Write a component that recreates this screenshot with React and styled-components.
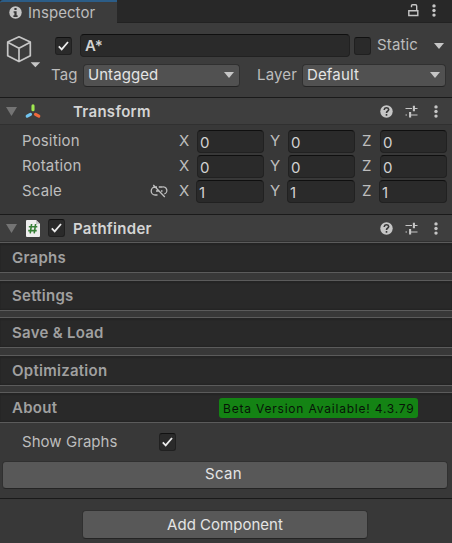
import React from "react";
import styled, { createGlobalStyle } from "styled-components";

const GlobalStyle = createGlobalStyle`
  * { box-sizing: border-box; }
  body { margin: 0; background: #383838; }
`;

const Panel = styled.main`
  width: 452px;
  height: 543px;
  overflow: hidden;
  background: #383838;
  color: #bdbdbd;
  font: 400 15px/18px Inter, sans-serif;
  letter-spacing: 0.15px;
  white-space: nowrap;
`;

const TabBar = styled.header`
  display: flex;
  height: 23px;
  background: #282828;
`;

const Tab = styled.div`
  display: flex;
  align-items: center;
  gap: 6px;
  width: 117px;
  padding-left: 9px;
  border-top: 2px solid #2c5d87;
  border-top-left-radius: 3px;
  background: #3c3c3c;
`;

const TabTools = styled.div`
  display: flex;
  flex: 1;
  align-items: center;
  justify-content: flex-end;
  gap: 12px;
  padding: 0 15px 2px 0;
  border-bottom: 1px solid #222;
`;

const Label = styled.span`
  font-weight: ${(p) => p.$weight || 400};
  letter-spacing: ${(p) => p.$track ?? 0.15}px;
  color: ${(p) => p.$color || "inherit"};
`;

const ObjectHeader = styled.section`
  display: flex;
  height: 75px;
  padding: 11px 0 0 5px;
  border-bottom: 1px solid #1a1a1a;
  background: #3c3c3c;
`;

const CubeSlot = styled.div`
  width: 46px;
  padding-top: 1px;
`;

const HeaderRows = styled.div`
  display: flex;
  flex-direction: column;
  gap: 7px;
`;

const NameRow = styled.div`
  display: grid;
  grid-template-columns: 25px 274px 23px 57px 11px;
  align-items: center;
  height: 23px;
  padding-left: 4px;

  & > :nth-child(4) { padding-bottom: 2px; }
`;

const SelectRow = styled.div`
  display: grid;
  grid-template-columns: 32px 157px 17px 45px 144px;
  align-items: center;
  height: 23px;

  & > :nth-child(3) { grid-column: 4; }
  & > span { padding: 0 0 1px; }
`;

const Check = styled.span`
  display: flex;
  align-items: center;
  justify-content: center;
  width: 17px;
  height: 18px;
  border: 1px solid #202020;
  border-top-color: #111;
  border-radius: 3px;
  background: #2a2a2a;
`;

const Field = styled.div`
  display: flex;
  align-items: center;
  width: ${(p) => p.$width}px;
  height: 23px;
  margin-left: ${(p) => p.$shift || 0}px;
  padding: ${(p) => p.$pad || "2px 0 0 2px"};
  border: 1px solid #212121;
  border-top-color: #0f0f0f;
  border-radius: 4px;
  background: #2a2a2a;
  color: #d2d2d2;
`;

const Select = styled.div`
  display: flex;
  align-items: center;
  justify-content: space-between;
  height: 23px;
  padding: 0 5px 1px 4px;
  border: 1px solid #303030;
  border-bottom-color: #242424;
  border-radius: 4px;
  background: #515151;
  color: #e4e4e4;
`;

const ComponentHeader = styled.div`
  display: grid;
  grid-template-columns: 19px 23px 25px 1fr auto;
  align-items: center;
  height: 27px;
  padding: 0 13px 0 6px;
  border-bottom: 1px solid #303030;
  background: #3e3e3e;

  & > :nth-child(4) { padding-top: 2px; }
`;

const HeaderTools = styled.div`
  display: grid;
  grid-template-columns: 25px 28px 6px;
  align-items: center;
`;

const TransformBody = styled.div`
  display: flex;
  flex-direction: column;
  gap: 2px;
  height: 90px;
  padding: 5px 0 0 22px;
  border-bottom: 1px solid #1a1a1a;
`;

const VectorRow = styled.div`
  display: grid;
  grid-template-columns: 129px 28px 18px 73px 18px 74px 18px 68px;
  align-items: center;
  height: 23px;

  & > span { padding-bottom: 1px; }
`;

const Foldouts = styled.div`
  display: flex;
  flex-direction: column;
`;

const Foldout = styled.div`
  display: grid;
  grid-template-columns: 207px 199px;
  align-items: center;
  height: 31px;
  margin-top: ${(p) => p.$gap}px;
  padding: 0 0 0 12px;
  border-top: 1px solid #5b5b5b;
  border-bottom: 1px solid #5b5b5b;
  background: #292929;
  box-shadow: inset 0 2px 1px #242424, inset 0 -1px 1px #242424;
`;

const Badge = styled.span`
  height: 20px;
  padding-left: 4px;
  border-radius: 3px;
  background: #148314;
  color: #071507;
  font-size: 12px;
  line-height: 21px;
  letter-spacing: 0.8px;
`;

const ShowRow = styled.div`
  display: grid;
  grid-template-columns: 137px 17px;
  align-items: center;
  height: 38px;
  padding: 0 0 1px 22px;
`;

const Button = styled.button`
  display: block;
  width: ${(p) => p.$width}px;
  height: ${(p) => p.$height}px;
  margin: 0 0 0 ${(p) => p.$left}px;
  padding: 0 ${(p) => p.$nudge || 0}px ${(p) => p.$lift || 0}px 0;
  border: 1px solid #303030;
  border-bottom-color: #242424;
  border-radius: 4px;
  background: #585858;
  color: #e4e4e4;
  font: inherit;
  letter-spacing: ${(p) => p.$track}px;
`;

const AddArea = styled.footer`
  margin-top: 9px;
  padding-top: 11px;
  border-top: 1px solid #1a1a1a;
`;

const Svg = styled.svg`
  display: block;
  overflow: visible;
`;

const Info = () => (
  <Svg width="13" height="13" viewBox="0 0 13 13">
    <circle cx="6.5" cy="6.5" r="6.2" fill="#c6c6c6" />
    <path d="M5.4 2h2.2v2H5.4zM4.6 5.3h3v4h1V11H4.4V9.3h1V6.8h-.8z" fill="#383838" />
  </Svg>
);
const Lock = () => (
  <Svg width="11" height="13" viewBox="0 0 11 13">
    <path d="M.8 6.8h9v4.7h-9zM3.5 3.2V1.6Q3.5.8 4.5.8h3q1.2 0 1.2 1.2v4.5" fill="none" stroke="#c6c6c6" strokeWidth="1.4" />
  </Svg>
);
const Dots = () => (
  <Svg width="6" height="13" viewBox="0 0 6 13">
    {[1.9, 6.5, 11.1].map((y) => <circle key={y} cx="3" cy={y} r="1.7" fill="#c6c6c6" />)}
  </Svg>
);
const Cube = () => (
  <Svg width="36" height="33" viewBox="0 0 36 33">
    <path d="M14 1.8 25.3 7V20.8L14 26.6 2.7 20.8V7zM2.7 7.2 14 13.3l11.3-6.1M14 13.3v13" fill="none" stroke="#c6c6c6" strokeWidth="1.7" strokeLinejoin="round" />
    <path d="M25.6 27.3h9.6l-4.8 5z" fill="#c6c6c6" />
  </Svg>
);
const Arrow = ({ color = "#c6c6c6", w = 10, h = 6 }) => (
  <Svg width={w} height={h} viewBox="0 0 10 6" preserveAspectRatio="none"><path d="M0 0h10L5 6z" fill={color} /></Svg>
);
const Tick = () => (
  <Svg width="11" height="10" viewBox="0 0 11 10"><path d="m.8 5.4 2.9 3L10 1" fill="none" stroke="#ececec" strokeWidth="1.8" /></Svg>
);
const Axes = () => (
  <Svg width="16" height="15" viewBox="0 0 16 15">
    <g fill="none" strokeWidth="3.1" strokeLinecap="round">
      <path d="M8 1.8v4" stroke="#a0e850" /><path d="m2.2 12.2 3.3-1.9" stroke="#70c4f0" /><path d="m10.5 10.3 3.3 1.9" stroke="#f06a3c" />
    </g>
  </Svg>
);
const Script = () => (
  <Svg width="16" height="17" viewBox="0 0 16 17">
    <path d="M1 0h10l4 4v12q0 1-1 1H2q-1 0-1-1V1q0-1 1-1z" fill="#eee" />
    <path d="M11 0v4h4z" fill="#c8c8c8" />
    <path d="M6.6 4 5.2 13.4M10.6 4 9.2 13.4M3.8 6.8h8.5M3.2 10.6h8.5" stroke="#378037" strokeWidth="1.6" />
  </Svg>
);
const Help = () => (
  <Svg width="13" height="13" viewBox="0 0 13 13">
    <circle cx="6.5" cy="6.5" r="6.2" fill="#c6c6c6" />
    <path d="M4.3 5V4.4Q4.6 2.8 6.5 2.8T8.7 4.5Q8.7 5.5 7.5 6.2 6.5 6.8 6.5 8M6.5 9.1v1.6" fill="none" stroke="#383838" strokeWidth="1.6" />
  </Svg>
);
const Sliders = () => (
  <Svg width="13" height="13" viewBox="0 0 13 13">
    <path d="M.5 3.5H7M9 3.5H12.5M.5 10H2M5 10h7.5" stroke="#c6c6c6" strokeWidth="1.2" />
    <path d="M8.9.7v5.5M5.1 7v5.4" stroke="#c6c6c6" strokeWidth="2.1" />
  </Svg>
);
const Unlink = () => (
  <Svg width="16" height="14" viewBox="0 0 16 14">
    <path d="M6 3H4.2a3.6 3.6 0 0 0 0 8H6.5M7.8 3h3.4a3.6 3.6 0 0 1 2 7M5 7h2.5M10 7h1.5M2.3 1l11.5 12" fill="none" stroke="#c0c0c0" strokeWidth="1.3" />
  </Svg>
);

const Tools = () => <HeaderTools><Help /><Sliders /><Dots /></HeaderTools>;

const vectors = [
  { name: "Position", value: 0, width: 67, shift: 0 },
  { name: "Rotation", value: 0, width: 67, shift: 0 },
  { name: "Scale", value: 1, width: 68, shift: -1, unlinked: true },
];
const sections = [["Graphs", 0], ["Settings", 7], ["Save & Load", 6], ["Optimization", 7], ["About", 6]];

export default function App() {
  return (
    <Panel>
      <GlobalStyle />
      <TabBar>
        <Tab><Info /><Label $track={0.05}>Inspector</Label></Tab>
        <TabTools><Lock /><Dots /></TabTools>
      </TabBar>
      <ObjectHeader>
        <CubeSlot><Cube /></CubeSlot>
        <HeaderRows>
          <NameRow>
            <Check><Tick /></Check>
            <Field $width={270} $pad="0 0 0 4px"><Label $weight={600} $track={0.3}>A*</Label></Field>
            <Check />
            <Label>Static</Label>
            <Arrow />
          </NameRow>
          <SelectRow>
            <Label>Tag</Label>
            <Select><Label $track={0.05}>Untagged</Label><Arrow /></Select>
            <Label>Layer</Label>
            <Select><Label>Default</Label><Arrow /></Select>
          </SelectRow>
        </HeaderRows>
      </ObjectHeader>
      <ComponentHeader>
        <Arrow color="#747474" w={11} h={9} /><Axes /><i />
        <Label $weight={600} $track={0.3} $color="#d4d4d4">Transform</Label>
        <Tools />
      </ComponentHeader>
      <TransformBody>
        {vectors.map(({ name, value, width, shift, unlinked }) => (
          <VectorRow key={name}>
            <Label>{name}</Label>
            <span>{unlinked && <Unlink />}</span>
            <Label>X</Label><Field $width={width} $shift={shift}>{value}</Field>
            <Label>Y</Label><Field $width={width} $shift={shift}>{value}</Field>
            <Label>Z</Label><Field $width={width} $shift={shift}>{value}</Field>
          </VectorRow>
        ))}
      </TransformBody>
      <ComponentHeader>
        <Arrow color="#747474" w={11} h={9} /><Script /><Check><Tick /></Check>
        <Label $weight={600} $track={0.3} $color="#d4d4d4">Pathfinder</Label>
        <Tools />
      </ComponentHeader>
      <Foldouts>
        {sections.map(([name, gap]) => (
          <Foldout key={name} $gap={gap}>
            <Label $weight={600} $track={0.27} $color="#a0a0a0">{name}</Label>
            {name === "About" && <Badge>Beta Version Available! 4.3.79</Badge>}
          </Foldout>
        ))}
      </Foldouts>
      <ShowRow><Label $track={0.05}>Show Graphs</Label><Check><Tick /></Check></ShowRow>
      <Button $width={446} $height={28} $left={2} $lift={2} $nudge={3} $track={0.4}>Scan</Button>
      <AddArea><Button $width={286} $height={29} $left={82} $track={0.02}>Add Component</Button></AddArea>
    </Panel>
  );
}
